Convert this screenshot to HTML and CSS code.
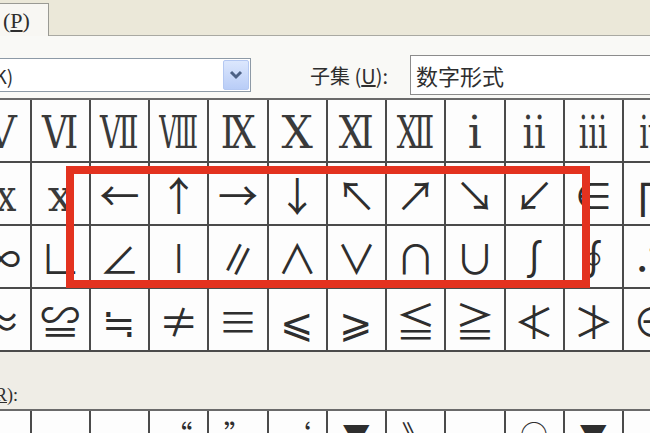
FILE: index.html
```html
<!DOCTYPE html>
<html lang="zh-CN">
<head>
  <meta charset="UTF-8" />
  <title>符号</title>
  <link rel="stylesheet" href="styles.css">
</head>
<body>

  <div class="tabs">
    <div class="tab active">(<u>P</u>)</div>
  </div>

  <div class="panel">
    <div class="fields">
      <div class="combo">
        <span class="combo-text">(K)</span>
        <span class="combo-btn">
          <svg width="14" height="10" viewBox="0 0 14 10"><path d="M2 2 L7 7 L12 2" fill="none" stroke="#4d6185" stroke-width="3"/></svg>
        </span>
      </div>
      <div class="subset-label">子集 (<u>U</u>):</div>
      <div class="subset-box">数字形式</div>
    </div>

    <div class="grid-wrap">
      <div class="grid">
        <!-- 第一行 -->
        <div class="cell roman"><span>Ⅴ</span></div>
        <div class="cell roman"><span class="w2">Ⅵ</span></div>
        <div class="cell roman"><span class="w3">Ⅶ</span></div>
        <div class="cell roman"><span class="w4">Ⅷ</span></div>
        <div class="cell roman"><span class="w2">Ⅸ</span></div>
        <div class="cell roman"><span>Ⅹ</span></div>
        <div class="cell roman"><span class="w2">Ⅺ</span></div>
        <div class="cell roman"><span class="w3">Ⅻ</span></div>
        <div class="cell roman"><span>ⅰ</span></div>
        <div class="cell roman"><span class="w2">ⅱ</span></div>
        <div class="cell roman"><span class="w3">ⅲ</span></div>
        <div class="cell roman"><span class="w3">ⅳ</span></div>
        <!-- 第二行 -->
        <div class="cell roman"><span class="w2">ⅸ</span></div>
        <div class="cell roman"><span>ⅹ</span></div>
        <div class="cell">←</div>
        <div class="cell">↑</div>
        <div class="cell">→</div>
        <div class="cell">↓</div>
        <div class="cell">↖</div>
        <div class="cell">↗</div>
        <div class="cell">↘</div>
        <div class="cell">↙</div>
        <div class="cell">∈</div>
        <div class="cell">∏</div>
        <!-- 第三行 -->
        <div class="cell">∞</div>
        <div class="cell">∟</div>
        <div class="cell">∠</div>
        <div class="cell">∣</div>
        <div class="cell">∥</div>
        <div class="cell">∧</div>
        <div class="cell">∨</div>
        <div class="cell">∩</div>
        <div class="cell">∪</div>
        <div class="cell">∫</div>
        <div class="cell">∮</div>
        <div class="cell">∴</div>
        <!-- 第四行 -->
        <div class="cell">≈</div>
        <div class="cell">≌</div>
        <div class="cell">≒</div>
        <div class="cell">≠</div>
        <div class="cell">≡</div>
        <div class="cell">⩽</div>
        <div class="cell">⩾</div>
        <div class="cell">≦</div>
        <div class="cell">≧</div>
        <div class="cell">≮</div>
        <div class="cell">≯</div>
        <div class="cell">⊕</div>
      </div>
      <div class="highlight"></div>
    </div>
  </div>

  <div class="recent">
    <div class="recent-label">(<u>R</u>):</div>
    <div class="grid recent-grid">
      <div class="cell"></div>
      <div class="cell">，</div>
      <div class="cell">。</div>
      <div class="cell">“</div>
      <div class="cell">”</div>
      <div class="cell">‘</div>
      <div class="cell">▼</div>
      <div class="cell">》</div>
      <div class="cell">…</div>
      <div class="cell">○</div>
      <div class="cell">▼</div>
      <div class="cell"></div>
    </div>
  </div>

</body>
</html>
```

FILE: styles.css
```css
html {
  overflow: hidden;
}

body {
  margin: 0;
  width: 650px;
  height: 433px;
  overflow: hidden;
  font-family: 'Noto Sans CJK SC', sans-serif;
  background-color: #efede6;
  color: #2e2e2e;
}

/* 标签页 */
.tabs {
  height: 35px;
  background-color: #ebe8d9;
  border-bottom: 1px solid #a9a9a2;
  display: flex;
  align-items: flex-end;
}

.tab {
  height: 32px;
  width: 45px;
  padding-left: 3px;
  background-color: #f8f7f3;
  border: 1px solid #9a9a94;
  border-left: none;
  border-bottom: none;
  margin-bottom: -1px;
  font-family: 'Liberation Serif', serif;
  font-size: 22px;
  line-height: 34px;
}

.panel {
  background-color: #f9f9f6;
  padding-top: 18px;
}

.fields {
  display: flex;
  align-items: center;
  height: 42px;
}

.combo {
  width: 253px;
  height: 34px;
  margin-left: -2px;
  box-sizing: border-box;
  border: 1px solid #8d9aa6;
  background-color: white;
  display: flex;
  align-items: center;
  justify-content: space-between;
  overflow: hidden;
}

.combo-text {
  margin-left: -11px;
  font-size: 19px;
}

.combo-btn {
  width: 26px;
  height: 30px;
  margin-right: 1px;
  box-sizing: border-box;
  border: 1px solid #b4c8f2;
  border-radius: 2px;
  background: linear-gradient(#dce7fd, #b9cdf7);
  display: flex;
  align-items: center;
  justify-content: center;
}

.subset-label {
  margin-left: 59px;
  font-size: 20px;
  width: 100px;
  white-space: nowrap;
}

.subset-box {
  flex: 1;
  height: 40px;
  margin-right: -4px;
  box-sizing: border-box;
  border: 1px solid #8c8c8c;
  background-color: white;
  font-size: 22px;
  line-height: 38px;
  padding-left: 5px;
}

/* 字符表格 */
.grid-wrap {
  position: relative;
  padding-top: 2px;
}

.grid {
  display: grid;
  grid-template-columns: repeat(12, 57.25px);
  grid-auto-rows: 61px;
  gap: 2px;
  margin-left: -27.75px;
  background-color: #4b4b4b;
  border-top: 2px solid #6a6a6a;
  border-bottom: 2px solid #4b4b4b;
}

.cell {
  background-color: #fdfdfd;
  display: flex;
  align-items: center;
  justify-content: center;
  font-size: 40px;
  line-height: 1;
  overflow: hidden;
}

.cell.roman {
  font-family: 'DejaVu Serif', 'Noto Sans CJK SC', serif;
  font-size: 44px;
  font-weight: 300;
  color: #3a3a3a;
  padding-top: 4px;
}

.roman span {
  display: inline-block;
  white-space: nowrap;
}

.roman .w2 {
  transform: scaleX(0.82);
}

.roman .w3 {
  transform: scaleX(0.68);
}

.roman .w4 {
  transform: scaleX(0.56);
}

.highlight {
  position: absolute;
  left: 66px;
  top: 70px;
  width: 524px;
  height: 122px;
  box-sizing: border-box;
  border: 8px solid #e3321f;
}

/* 近期使用过的符号 */
.recent {
  padding-top: 3px;
}

.recent-label {
  height: 54px;
  margin-left: -11px;
  font-family: 'Liberation Serif', serif;
  font-size: 18px;
  line-height: 80px;
}

.recent-grid {
  grid-auto-rows: 24px;
  border-bottom: none;
}

.recent-grid .cell {
  align-items: flex-start;
  font-size: 28px;
  padding-top: 9px;
}
```
